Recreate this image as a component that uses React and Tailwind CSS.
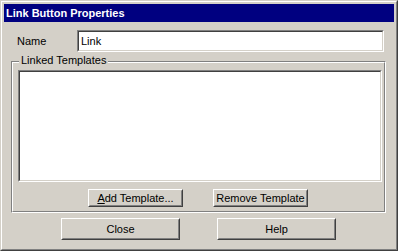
import React from 'react';

// Win2000 style bevels
const Raised = ({ className = '', children }) => (
  <button
    type="button"
    className={`border border-t-white border-l-white border-r-[#404040] border-b-[#404040] bg-[#d4d0c8] p-0 text-black ${className}`}
  >
    <div className="flex h-full w-full items-center justify-center border border-t-[#d4d0c8] border-l-[#d4d0c8] border-r-[#808080] border-b-[#808080]">
      {children}
    </div>
  </button>
);

const Sunken = ({ className = '', children }) => (
  <div className={`border border-t-[#808080] border-l-[#808080] border-r-white border-b-white ${className}`}>
    <div className="h-full w-full border border-t-[#404040] border-l-[#404040] border-r-[#d4d0c8] border-b-[#d4d0c8] bg-white">
      {children}
    </div>
  </div>
);

export default function App() {
  return (
    <div
      className="h-[251px] w-[398px] border border-t-[#d4d0c8] border-l-[#d4d0c8] border-r-[#404040] border-b-[#404040] bg-[#d4d0c8] text-[11px] leading-none text-black"
      style={{ fontFamily: '"Liberation Sans", Arial, sans-serif' }}
    >
      <div className="flex h-full flex-col border border-t-white border-l-white border-r-[#808080] border-b-[#808080] p-[2px]">
        {/* title bar */}
        <div className="flex h-[18px] shrink-0 items-center bg-[#000080] pl-[2px] font-bold text-white">
          Link Button Properties
        </div>

        {/* name row */}
        <div className="mt-[8px] flex h-[22px] shrink-0 items-center">
          <span className="ml-[13px] w-[60px]">Name</span>
          <Sunken className="h-[22px] w-[307px]">
            <div className="flex h-full items-center pl-[2px]">Link</div>
          </Sunken>
        </div>

        {/* group box */}
        <div className="relative ml-[7px] mt-[9px] h-[152px] w-[375px] shrink-0 border border-t-[#808080] border-l-[#808080] border-r-white border-b-white">
          <span className="absolute left-[7px] top-[-7px] bg-[#d4d0c8] px-[2px]">Linked Templates</span>
          <div className="h-full w-full border border-t-white border-l-white border-r-[#808080] border-b-[#808080]">
            <Sunken className="ml-[5px] mt-[7px] h-[112px] w-[364px]" />
            <div className="mt-[7px] flex gap-[30px] pl-[75px]">
              <Raised className="h-[18px] w-[95px]">
                <span>
                  <u>A</u>dd Template...
                </span>
              </Raised>
              <Raised className="h-[18px] w-[95px]">Remove Template</Raised>
            </div>
          </div>
        </div>

        {/* bottom buttons */}
        <div className="mt-[5px] flex gap-[37px] pl-[57px]">
          <Raised className="h-[22px] w-[119px]">Close</Raised>
          <Raised className="h-[22px] w-[119px]">Help</Raised>
        </div>
      </div>
    </div>
  );
}
